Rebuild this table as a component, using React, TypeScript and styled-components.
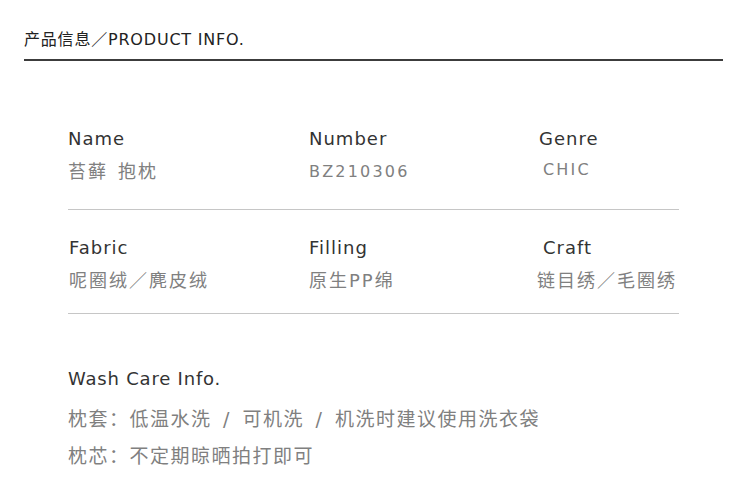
import React from "react";
import styled, { createGlobalStyle } from "styled-components";

const GlobalStyle = createGlobalStyle`
  html, body {
    margin: 0;
    padding: 0;
    background: #ffffff;
  }
  body {
    font-family: "DejaVu Sans", "Noto Sans CJK SC", sans-serif;
  }
`;

const Page = styled.div`
  width: 750px;
  height: 501px;
  background: #ffffff;
  overflow: hidden;
`;

const Header = styled.div`
  margin: 0 27px 0 24px;
  padding-top: 28px;
  padding-bottom: 7px;
  border-bottom: 2px solid #3c3c3c;
  font-size: 16px;
  line-height: 24px;
  letter-spacing: 0.8px;
  color: #222222;
`;

const Grid = styled.div`
  margin: 40px 71px 0 68px;
`;

const Row = styled.div<{ $last?: boolean }>`
  display: grid;
  grid-template-columns: 241px 230px 1fr;
  padding: 26px 0 ${(p) => (p.$last ? 20 : 25)}px;
  border-bottom: 1px solid #c6c6c6;
`;

const Cell = styled.div<{ $shift?: number }>`
  display: flex;
  flex-direction: column;
  gap: 9px;
  padding-left: ${(p) => p.$shift ?? 0}px;
`;

const Label = styled.div`
  font-size: 18px;
  line-height: 24px;
  color: #333333;
  letter-spacing: 1px;
`;

const Value = styled.div<{ $latin?: boolean; $nudge?: number }>`
  font-size: ${(p) => (p.$latin ? 16 : 18)}px;
  line-height: 24px;
  color: #808080;
  letter-spacing: ${(p) => (p.$latin ? 2.2 : 2)}px;
  white-space: nowrap;
  margin-top: ${(p) => p.$nudge ?? 0}px;
`;

const Gap = styled.span`
  display: inline-block;
  width: 10px;
`;

const Care = styled.div`
  margin: 53px 0 0 68px;
`;

const CareTitle = styled.div`
  font-size: 18px;
  line-height: 24px;
  color: #333333;
  letter-spacing: 0.8px;
  margin-bottom: 10px;
`;

const CareLine = styled.div`
  font-size: 19px;
  line-height: 37px;
  color: #808080;
  letter-spacing: 1.5px;
  white-space: nowrap;
`;

const Sep = styled.span`
  margin: 0 4px;
`;

type Item = {
  label: string;
  value: React.ReactNode;
  latin?: boolean;
  shift?: number;
  valueShift?: number;
  nudge?: number;
};

const rows: Item[][] = [
  [
    {
      label: "Name",
      value: (
        <>
          苔藓<Gap />抱枕
        </>
      ),
    },
    { label: "Number", value: "BZ210306", latin: true },
    { label: "Genre", value: "CHIC", latin: true, valueShift: 4, nudge: -2 },
  ],
  [
    { label: "Fabric", value: "呢圈绒／麂皮绒", shift: 1 },
    { label: "Filling", value: "原生PP绵" },
    { label: "Craft", value: "链目绣／毛圈绣", shift: 4, valueShift: -6 },
  ],
];

export default function App() {
  return (
    <Page>
      <GlobalStyle />
      <Header>产品信息／PRODUCT INFO.</Header>
      <Grid>
        {rows.map((row, i) => (
          <Row key={i} $last={i === rows.length - 1}>
            {row.map((item) => (
              <Cell key={item.label} $shift={item.shift}>
                <Label>{item.label}</Label>
                <Value
                  $latin={item.latin}
                  $nudge={item.nudge}
                  style={item.valueShift ? { marginLeft: item.valueShift } : undefined}
                >
                  {item.value}
                </Value>
              </Cell>
            ))}
          </Row>
        ))}
      </Grid>
      <Care>
        <CareTitle>Wash Care Info.</CareTitle>
        <CareLine>
          枕套：低温水洗 <Sep>/</Sep> 可机洗 <Sep>/</Sep> 机洗时建议使用洗衣袋
        </CareLine>
        <CareLine>枕芯：不定期晾晒拍打即可</CareLine>
      </Care>
    </Page>
  );
}
